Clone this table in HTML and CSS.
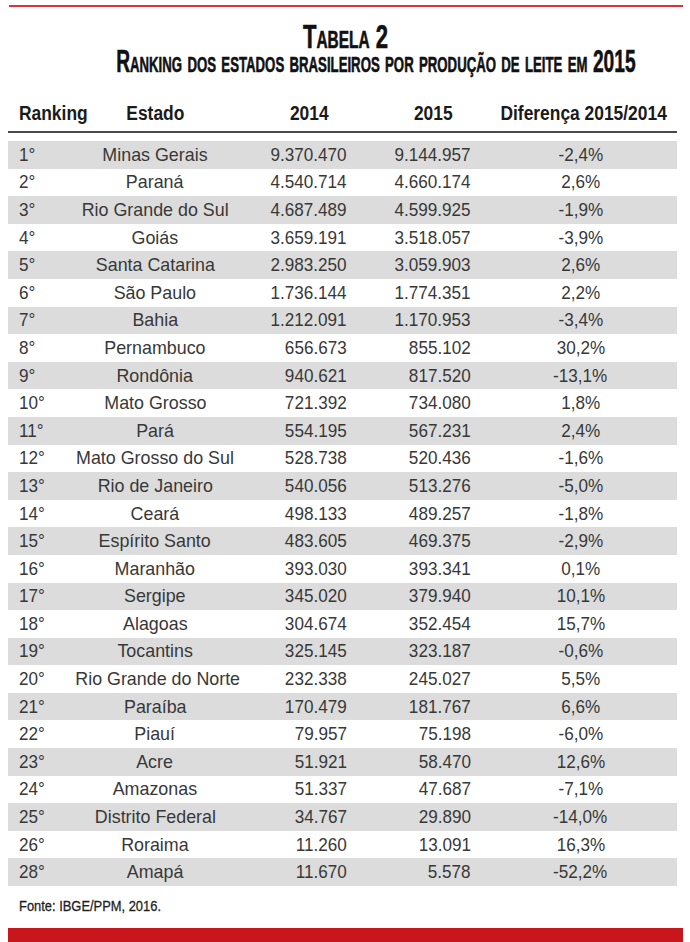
FILE: index.html
```html
<!DOCTYPE html>
<html lang="pt-BR">
<head>
    <meta charset="UTF-8">
    <meta name="viewport" content="width=device-width, initial-scale=1.0">
    <title>Tabela 2</title>
    <link rel="stylesheet" href="styles.css">
</head>
<body>
    <div class="page">
        <div class="topline"></div>
        <h1 class="title"><span>Tabela 2</span></h1>
        <h2 class="title sub"><span>Ranking dos estados brasileiros por produção de leite em <b>2015</b></span></h2>
        <div class="grid head">
            <div class="l"><span>Ranking</span></div>
            <div class="c"><span>Estado</span></div>
            <div class="c"><span>2014</span></div>
            <div class="c"><span>2015</span></div>
            <div class="c"><span>Diferença 2015/2014</span></div>
        </div>
        <div class="rows" id="rows"></div>
        <p class="fonte"><span>Fonte: IBGE/PPM, 2016.</span></p>
        <div class="redbar"></div>
    </div>
    <script>
        let data = [
            ["1°", "Minas Gerais", "9.370.470", "9.144.957", "-2,4%"],
            ["2°", "Paraná", "4.540.714", "4.660.174", "2,6%"],
            ["3°", "Rio Grande do Sul", "4.687.489", "4.599.925", "-1,9%"],
            ["4°", "Goiás", "3.659.191", "3.518.057", "-3,9%"],
            ["5°", "Santa Catarina", "2.983.250", "3.059.903", "2,6%"],
            ["6°", "São Paulo", "1.736.144", "1.774.351", "2,2%"],
            ["7°", "Bahia", "1.212.091", "1.170.953", "-3,4%"],
            ["8°", "Pernambuco", "656.673", "855.102", "30,2%"],
            ["9°", "Rondônia", "940.621", "817.520", "-13,1%"],
            ["10°", "Mato Grosso", "721.392", "734.080", "1,8%"],
            ["11°", "Pará", "554.195", "567.231", "2,4%"],
            ["12°", "Mato Grosso do Sul", "528.738", "520.436", "-1,6%"],
            ["13°", "Rio de Janeiro", "540.056", "513.276", "-5,0%"],
            ["14°", "Ceará", "498.133", "489.257", "-1,8%"],
            ["15°", "Espírito Santo", "483.605", "469.375", "-2,9%"],
            ["16°", "Maranhão", "393.030", "393.341", "0,1%"],
            ["17°", "Sergipe", "345.020", "379.940", "10,1%"],
            ["18°", "Alagoas", "304.674", "352.454", "15,7%"],
            ["19°", "Tocantins", "325.145", "323.187", "-0,6%"],
            ["20°", "Rio Grande do Norte", "232.338", "245.027", "5,5%"],
            ["21°", "Paraíba", "170.479", "181.767", "6,6%"],
            ["22°", "Piauí", "79.957", "75.198", "-6,0%"],
            ["23°", "Acre", "51.921", "58.470", "12,6%"],
            ["24°", "Amazonas", "51.337", "47.687", "-7,1%"],
            ["25°", "Distrito Federal", "34.767", "29.890", "-14,0%"],
            ["26°", "Roraima", "11.260", "13.091", "16,3%"],
            ["28°", "Amapá", "11.670", "5.578", "-52,2%"]
        ]

        let rows = document.getElementById('rows');
        data.forEach((d, i)=>{
            let row = document.createElement('div');
            row.className = 'grid row' + (i % 2 == 0 ? ' gray' : '');
            row.innerHTML =
                '<div class="l"><span>' + d[0] + '</span></div>' +
                '<div class="c name"><span>' + d[1] + '</span></div>' +
                '<div class="r n14"><span>' + d[2] + '</span></div>' +
                '<div class="r n15"><span>' + d[3] + '</span></div>' +
                '<div class="c dif"><span>' + d[4] + '</span></div>';
            rows.appendChild(row);
        })
    </script>
</body>
</html>
```

FILE: styles.css
```css
*{
    margin: 0;
    padding: 0;
}
body{
    background: #ffffff;
    font-family: "Liberation Sans", Arial, sans-serif;
}
.page{
    width: 690px;
    height: 942px;
    padding-top: 5px;
    box-sizing: border-box;
    display: flex;
    flex-direction: column;
}
.topline{
    height: 2px;
    margin: 0 7px 0 9px;
    background: #d8343a;
}

/* titles: condensed look by squeezing the text */
.title{
    display: flex;
    justify-content: center;
    white-space: nowrap;
    color: #111111;
    font-weight: bold;
    font-variant: small-caps;
    font-size: 33px;
    line-height: 28px;
    margin-top: 16px;
    -webkit-text-stroke: 0.6px #111111;
}
.title span{
    display: inline-block;
    transform: scaleX(0.67);
}
.sub{
    font-size: 32px;
    line-height: 26px;
    margin-top: -3px;
    padding-left: 62px;
}
.sub span{
    transform: scaleX(0.6);
}
.sub b{
    font-variant: normal;
}

.grid{
    display: grid;
    grid-template-columns: 62px 170px 138px 110px 1fr;
    margin: 0 13px 0 8px;
    align-items: center;
    white-space: nowrap;
}
.grid span{
    display: inline-block;
}
.head{
    height: 35px;
    margin-top: 22px;
    font-size: 20px;
    font-weight: bold;
    color: #1a1a1a;
    border-bottom: 2px solid #4a4a4a;
}
.head span{
    transform: scaleX(0.87);
}
.rows{
    margin-top: 8px;
}
.row{
    height: 27.6px;
    font-size: 19px;
    color: #383838;
}
.row span{
    transform: scaleX(0.9);
}
.row .name span{
    transform: scaleX(0.94);
}
.gray{
    background: #dcdcdc;
}
.l{
    padding-left: 11px;
}
.l span{
    transform-origin: left center;
}
.c{
    text-align: center;
}
.r{
    text-align: right;
}
.r span{
    transform-origin: right center;
}
.n14{
    padding-right: 31px;
}
.n15{
    padding-right: 17px;
}
.dif{
    padding-right: 4px;
}
.fonte{
    font-size: 15px;
    line-height: 18px;
    color: #1e1e1e;
    margin: 11px 0 0 19px;
    white-space: nowrap;
    -webkit-text-stroke: 0.3px #1e1e1e;
}
.fonte span{
    display: inline-block;
    transform: scaleX(0.86);
    transform-origin: left center;
}
.redbar{
    margin: auto 7px 0 8px;
    height: 14px;
    background: #c8161d;
}
```
